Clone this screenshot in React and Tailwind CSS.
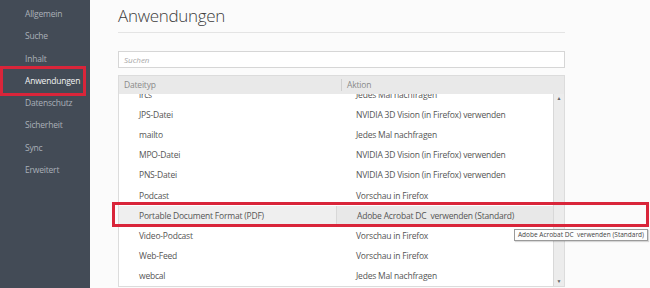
import React from 'react';

const navItems = ['Allgemein', 'Suche', 'Inhalt', 'Anwendungen', 'Datenschutz', 'Sicherheit', 'Sync', 'Erweitert'];

const rows = [
  ['ircs', 'Jedes Mal nachfragen'],
  ['JPS-Datei', 'NVIDIA 3D Vision (in Firefox) verwenden'],
  ['mailto', 'Jedes Mal nachfragen'],
  ['MPO-Datei', 'NVIDIA 3D Vision (in Firefox) verwenden'],
  ['PNS-Datei', 'NVIDIA 3D Vision (in Firefox) verwenden'],
  ['Podcast', 'Vorschau in Firefox'],
  ['Portable Document Format (PDF)', 'Adobe Acrobat DC  verwenden (Standard)'],
  ['Video-Podcast', 'Vorschau in Firefox'],
  ['Web-Feed', 'Vorschau in Firefox'],
  ['webcal', 'Jedes Mal nachfragen'],
];

const Sidebar = () => (
  <nav className="w-[90px] shrink-0 bg-[#434b56] pt-[3px]">
    {navItems.map((item) => {
      const active = item === 'Anwendungen';
      return (
        <div
          key={item}
          className={`relative h-[22.3px] pl-[25px] text-[8.5px] leading-[22px] tracking-[-0.2px] ${
            active ? 'text-[#f2f3f5]' : 'text-[#aab0b8]'
          }`}
        >
          {active && (
            <div className="absolute left-0 top-[-4px] h-[30px] w-[86px] border-[3px] border-[#d9253a]" />
          )}
          {item}
        </div>
      );
    })}
  </nav>
);

const App = () => {
  return (
    <div className="relative flex h-[288px] w-[650px] overflow-hidden bg-[#fbfbfb] font-['Open_Sans',sans-serif]">
      <Sidebar />
      <main className="w-[447px] ml-[28px]">
        <div className="h-[33px] border-b border-[#e4e4e4]">
          <h1 className="pt-[3px] text-[17px] font-light leading-[26px] tracking-[-0.3px] text-[#3c3c3c]">Anwendungen</h1>
        </div>
        <div className="mt-[18px] h-[17px] border border-[#d6d6d6] bg-white pl-[5px] text-[8px] italic leading-[15px] text-[#a8a8a8]">
          Suchen
        </div>
        <div className="mt-[7px] border border-[#dcdcdc]">
          <div className="flex h-[18px] bg-[#e9e9e9] text-[8.5px] leading-[18px] tracking-[-0.2px] text-[#8a8a8a]">
            <div className="w-[222px] pl-[5px]">Dateityp</div>
            <div className="my-[3px] border-l border-[#cfcfcf]" />
            <div className="pl-[5px]">Aktion</div>
          </div>
          <div className="flex h-[192px]">
            <div className="h-full flex-1 overflow-hidden bg-white">
              <div className="mt-[-9px]">
                {rows.map(([type, action]) => {
                  const selected = type.startsWith('Portable');
                  return (
                    <div
                      key={type}
                      className={`flex h-[20.2px] items-center text-[8.5px] tracking-[-0.2px] text-[#555] ${
                        selected ? 'bg-[#efefef]' : ''
                      }`}
                    >
                      <div className="w-[217px] pl-[20px]">{type}</div>
                      <div
                        className={`flex h-full flex-1 items-center whitespace-pre pl-[20px] ${
                          selected ? 'border-l border-[#d8d8d8] bg-[#e8e8e8]' : ''
                        }`}
                      >
                        {action}
                      </div>
                    </div>
                  );
                })}
              </div>
            </div>
            <div className="flex w-[11px] flex-col items-center justify-between border-l border-[#d8d8d8] bg-[#ececec] py-[2px] text-[5px] leading-none text-[#666]">
              <span>▲</span>
              <span>▼</span>
            </div>
          </div>
        </div>
      </main>

      <div className="absolute left-[112px] top-[202px] h-[25px] w-[537px] border-[3px] border-[#d9253a]" />

      <div className="absolute left-[514px] top-[229px] whitespace-pre border border-[#9a9a9a] bg-[#fdfdfd] px-[3px] text-[6.5px] leading-[10px] text-[#444] shadow-[1px_1px_1px_rgba(0,0,0,0.15)]">
        Adobe Acrobat DC  verwenden (Standard)
      </div>
    </div>
  );
};

export default App;
